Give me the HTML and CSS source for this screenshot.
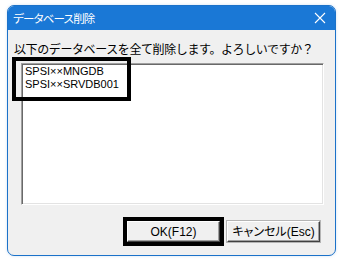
FILE: index.html
```html
<!DOCTYPE html>
<html lang="ja">
<head>
    <meta charset="UTF-8">
    <title>データベース削除</title>
    <link rel="stylesheet" href="styles.css">
</head>
<body>
    <div class="window">
        <div class="titlebar">
            <span class="title">データベース削除</span>
            <svg class="close" width="12" height="12" viewBox="0 0 12 12">
                <path d="M1 1 L11 11 M11 1 L1 11" stroke="#fff" stroke-width="1.1" fill="none"/>
            </svg>
        </div>
        <div class="content">
            <div class="message">以下のデータベースを全て削除します。よろしいですか？</div>
            <div class="listbox">
                <div class="item">SPSI××MNGDB</div>
                <div class="item">SPSI××SRVDB001</div>
            </div>
            <div class="buttons">
                <div class="focus-mark">
                    <button class="btn ok">OK(F12)</button>
                </div>
                <button class="btn">キャンセル(Esc)</button>
            </div>
        </div>
    </div>
    <!-- annotation box over the list items -->
    <div class="mark-items"></div>
</body>
</html>
```

FILE: styles.css
```css
html, body {
    margin: 0;
    padding: 0;
    background: #fff;
    width: 343px;
    height: 262px;
    overflow: hidden;
    font-family: "Liberation Sans", "Noto Sans CJK JP", sans-serif;
    font-size: 12px;
}

.window {
    position: relative;
    margin: 5px 0 0 7px;
    width: 327px;
    height: 249px;
    border: 1px solid #1b72c9;
    border-radius: 7px;
    overflow: hidden;
    background: #f0f0f0;
    box-shadow: 0 0 3px rgba(120, 170, 220, 0.35);
}

.titlebar {
    height: 24px;
    background: #1a78d6;
    color: #fff;
    display: flex;
    align-items: center;
    justify-content: space-between;
    padding: 0 9px 0 5px;
}

.title {
    font-family: "Noto Sans CJK JP", sans-serif;
    font-feature-settings: "palt";
    font-size: 11.5px;
    letter-spacing: -0.8px;
}

.close {
    display: block;
}

.content {
    padding: 11px 0 0 0;
}

.message {
    font-family: "Noto Sans CJK JP", sans-serif;
    font-size: 12px;
    line-height: 16px;
    padding-left: 6px;
    letter-spacing: -0.4px;
}

.listbox {
    margin: 6px 0 0 13px;
    width: 298px;
    height: 139px;
    background: #fff;
    border-top: 1px solid #a0a0a0;
    border-left: 1px solid #a0a0a0;
    border-right: 1px solid #fff;
    border-bottom: 1px solid #fff;
    box-shadow: inset 1px 1px 0 #696969, inset -1px -1px 0 #e3e3e3;
    padding: 1px 0 0 3px;
    box-sizing: content-box;
}

.item {
    line-height: 13px;
    font-size: 11px;
    color: #000;
}

.buttons {
    display: flex;
    justify-content: flex-end;
    align-items: center;
    gap: 3px;
    padding: 12px 15px 0 0;
}

.focus-mark {
    border: 4px solid #000;
    display: flex;
}

.btn {
    font-family: "Liberation Sans", "Noto Sans CJK JP", sans-serif;
    font-feature-settings: "palt";
    font-size: 12px;
    height: 21px;
    width: 93px;
    padding: 0;
    background: #f0f0f0;
    color: #000;
    border-top: 1px solid #fff;
    border-left: 1px solid #fff;
    border-right: 1px solid #404040;
    border-bottom: 1px solid #404040;
    box-shadow: inset -1px -1px 0 #a0a0a0;
    outline: 1px solid #b4b4b4;
    line-height: 18px;
}

.btn.ok {
    outline: none;
}

.mark-items {
    position: absolute;
    left: 12px;
    top: 57px;
    width: 111px;
    height: 36px;
    border: 4px solid #000;
}
```
